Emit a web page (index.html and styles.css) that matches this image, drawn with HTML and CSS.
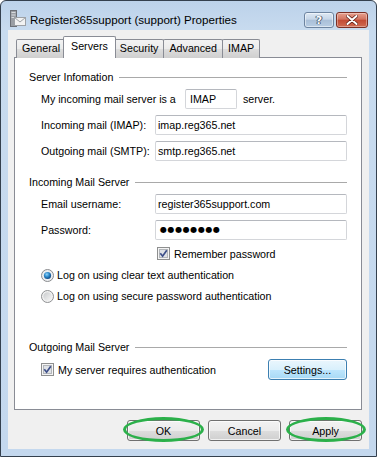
FILE: index.html
```html
<!DOCTYPE html>
<html>
<head>
<meta charset="utf-8">
<link rel="stylesheet" href="styles.css">
</head>
<body>
<div class="window">
  <div class="titlebar">
    <svg class="appicon" width="16" height="18" viewBox="0 0 16 18">
      <rect x="0.5" y="0.5" width="6" height="16" fill="#9a9ea4" stroke="#6c7077"/>
      <rect x="1.5" y="2" width="4" height="1" fill="#d8dadd"/>
      <rect x="1.5" y="4.5" width="4" height="1" fill="#d8dadd"/>
      <rect x="1.5" y="7" width="4" height="1" fill="#d8dadd"/>
      <rect x="4.5" y="7.5" width="11" height="8" fill="#f2f2f2" stroke="#9da1a6"/>
      <path d="M4.5 7.5 L10 12 L15.5 7.5" fill="none" stroke="#9da1a6"/>
    </svg>
    <span class="title">Register365support (support) Properties</span>
    <div class="caption">
      <div class="cbtn help"><span>?</span></div>
      <div class="cbtn close">
        <svg width="12" height="10" viewBox="0 0 12 10">
          <path d="M1.5 1 L10.5 9 M10.5 1 L1.5 9" stroke="#5a1a12" stroke-width="3.4" stroke-linecap="round"/>
          <path d="M1.5 1 L10.5 9 M10.5 1 L1.5 9" stroke="#ffffff" stroke-width="2" stroke-linecap="round"/>
        </svg>
      </div>
    </div>
  </div>
  <div class="client">
    <div class="tabs">
      <div class="tab">General</div>
      <div class="tab active">Servers</div>
      <div class="tab">Security</div>
      <div class="tab">Advanced</div>
      <div class="tab">IMAP</div>
    </div>
    <div class="panel">
      <div class="group g1"><span>Server Infomation</span><i class="rule"></i></div>
      <div class="row r1">
        <span class="lbl-inline">My incoming mail server is a</span>
        <div class="field short">IMAP</div>
        <span class="after">server.</span>
      </div>
      <div class="row r2"><span class="lbl">Incoming mail (IMAP):</span><div class="field">imap.reg365.net</div></div>
      <div class="row r2"><span class="lbl">Outgoing mail (SMTP):</span><div class="field">smtp.reg365.net</div></div>

      <div class="group g2"><span>Incoming Mail Server</span><i class="rule"></i></div>
      <div class="row r1"><span class="lbl">Email username:</span><div class="field">register365support.com</div></div>
      <div class="row r2"><span class="lbl">Password:</span><div class="field"><span class="dots">●●●●●●●●</span></div></div>
      <div class="row check-row remember">
        <svg class="cb" width="13" height="13" viewBox="0 0 13 13">
          <rect x="0.5" y="0.5" width="12" height="12" fill="#f4f4f4" stroke="#8e8f8f"/>
          <rect x="2.5" y="2.5" width="8" height="8" fill="#dfe2e6" stroke="#b3b6ba"/>
          <path d="M3.3 6.3 L5.6 9.2 L9.8 3.2" fill="none" stroke="#3d4f89" stroke-width="1.7"/>
        </svg>
        <span>Remember password</span>
      </div>
      <div class="row radio-row rr1">
        <svg class="rb" width="13" height="13" viewBox="0 0 13 13">
          <defs>
            <radialGradient id="dot" cx="0.4" cy="0.35" r="0.7">
              <stop offset="0" stop-color="#8fd3fb"/>
              <stop offset="0.5" stop-color="#2a87c8"/>
              <stop offset="1" stop-color="#0c3f7a"/>
            </radialGradient>
          </defs>
          <circle cx="6.5" cy="6.5" r="6" fill="#eceef0" stroke="#8a8c8e"/>
          <circle cx="6.5" cy="6.5" r="3.6" fill="url(#dot)"/>
        </svg>
        <span>Log on using clear text authentication</span>
      </div>
      <div class="row radio-row rr2">
        <svg class="rb" width="13" height="13" viewBox="0 0 13 13">
          <defs>
            <linearGradient id="off" x1="0" y1="0" x2="1" y2="1">
              <stop offset="0" stop-color="#c9cbcd"/>
              <stop offset="1" stop-color="#f6f6f6"/>
            </linearGradient>
          </defs>
          <circle cx="6.5" cy="6.5" r="6" fill="#f2f2f2" stroke="#8e9092"/>
          <circle cx="6.5" cy="6.5" r="4.2" fill="url(#off)"/>
        </svg>
        <span>Log on using secure password authentication</span>
      </div>

      <div class="group g3"><span>Outgoing Mail Server</span><i class="rule"></i></div>
      <div class="row auth-row">
        <svg class="cb" width="13" height="13" viewBox="0 0 13 13">
          <rect x="0.5" y="0.5" width="12" height="12" fill="#f4f4f4" stroke="#8e8f8f"/>
          <rect x="2.5" y="2.5" width="8" height="8" fill="#dfe2e6" stroke="#b3b6ba"/>
          <path d="M3.3 6.3 L5.6 9.2 L9.8 3.2" fill="none" stroke="#3d4f89" stroke-width="1.7"/>
        </svg>
        <span class="auth-text">My server requires authentication</span>
        <div class="btn settings">Settings...</div>
      </div>
    </div>
    <div class="footer">
      <div class="btn circled c-ok">OK</div>
      <div class="btn">Cancel</div>
      <div class="btn circled c-apply">Apply</div>
    </div>
  </div>
</div>
</body>
</html>
```

FILE: styles.css
```css
* { box-sizing: border-box; }
html, body { margin: 0; padding: 0; background: #ffffff; }
body {
  font-family: "Liberation Sans", Arial, sans-serif;
  font-size: 10.7px;
  color: #000;
  width: 377px;
  height: 457px;
  overflow: hidden;
}
.window {
  width: 377px;
  height: 457px;
  border: 1px solid #34404e;
  border-radius: 6px 6px 0 0;
  background: linear-gradient(to bottom, #bcd2ea 0px, #c8dbef 30px, #c4d8ee 100%);
  display: flex;
  flex-direction: column;
  padding-bottom: 7px;
}
.titlebar {
  height: 29px;
  display: flex;
  align-items: flex-start;
  padding: 0 8px 0 9px;
  flex-shrink: 0;
}
.appicon { margin-top: 9px; flex-shrink: 0; }
.title {
  margin-left: 4px;
  margin-top: 12px;
  font-size: 11.6px;
  line-height: 14px;
  color: #000;
}
.caption {
  margin-left: auto;
  margin-top: 11px;
  display: flex;
  gap: 2px;
}
.cbtn {
  height: 16px;
  border-radius: 3px;
  display: flex;
  align-items: center;
  justify-content: center;
}
.help {
  width: 30px;
  border: 1px solid #6d84a0;
  background: linear-gradient(to bottom, #dde8f4 0%, #c6d6e8 45%, #a9bfd8 50%, #b8cde3 100%);
  box-shadow: inset 0 0 0 1px rgba(255,255,255,0.5);
}
.help span {
  font-family: "DejaVu Sans", sans-serif;
  font-weight: bold;
  font-size: 11px;
  color: #fff;
  line-height: 11px;
  text-shadow: 0 0 1px #37475c, 0 0 1px #37475c, 1px 0 0 #56677c, -1px 0 0 #56677c;
}
.close {
  width: 32px;
  border: 1px solid #7a2f25;
  background: linear-gradient(to bottom, #e7a08e 0%, #d27461 45%, #c24a34 50%, #cf6b52 100%);
  box-shadow: inset 0 0 0 1px rgba(255,255,255,0.35);
}
.client {
  flex: 1;
  margin: 0 7px;
  background: #f0f0f0;
  padding: 8px 7px 0 6px;
  display: flex;
  flex-direction: column;
}
.tabs {
  height: 20px;
  display: flex;
  align-items: flex-end;
  padding-left: 2px;
  position: relative;
  z-index: 1;
  margin-bottom: -1px;
}
.tab {
  height: 19px;
  padding: 0 5px;
  line-height: 17px;
  border: 1px solid #898c95;
  border-bottom: none;
  margin-right: -1px;
  background: linear-gradient(to bottom, #f3f3f3 0%, #ebebeb 50%, #dddddd 51%, #cfcfcf 100%);
  border-radius: 2px 2px 0 0;
}
.tab.active {
  height: 22px;
  margin: 0 -1px 0 -2px;
  padding: 0 7px;
  line-height: 18px;
  background: #fff;
  position: relative;
  z-index: 2;
}
.tab.active + .tab { margin-left: -1px; }
.panel {
  height: 353px;
  background: #fff;
  border: 1px solid #898c95;
  padding: 0 14px 0 14px;
  display: flex;
  flex-direction: column;
}
.group {
  height: 15px;
  display: flex;
  align-items: center;
  flex-shrink: 0;
}
.group span { line-height: 15px; white-space: nowrap; padding-top: 2px; }
.rule {
  flex: 1;
  height: 1px;
  background: #a9a9a9;
  margin-left: 6px;
  margin-top: 2px;
}
.g1 { margin-top: 11px; }
.g2 { margin-top: 13px; }
.g3 { margin-top: 36px; }
.row {
  display: flex;
  align-items: center;
  padding-left: 12px;
  flex-shrink: 0;
}
.r1 { margin-top: 5px; height: 20px; }
.r2 { margin-top: 6px; height: 20px; }
.lbl { width: 114px; flex-shrink: 0; }
.lbl-inline { width: 144px; flex-shrink: 0; }
.field {
  width: 193px;
  height: 20px;
  border: 1px solid #d4d6da;
  border-top-color: #b5b8be;
  border-radius: 2px;
  padding-left: 2px;
  line-height: 18px;
  background: #fff;
  white-space: nowrap;
}
.field.short { width: 52px; padding-left: 4px; }
.after { margin-left: 6px; }
.dots {
  font-family: "DejaVu Sans", sans-serif;
  font-size: 8px;
  letter-spacing: 0.6px;
  margin-left: 2px;
  vertical-align: top;
}
.check-row { height: 13px; margin-top: 7px; }
.remember { padding-left: 128px; }
.cb { flex-shrink: 0; margin-right: 4px; }
.rb { flex-shrink: 0; margin-right: 3px; }
.radio-row { height: 14px; }
.rr1 { margin-top: 8px; }
.rr2 { margin-top: 7px; }
.auth-row { height: 21px; margin-top: 5px; }
.auth-text { flex: 1; }
.btn {
  height: 21px;
  border: 1px solid #707070;
  border-radius: 3px;
  background: linear-gradient(to bottom, #f2f2f2 0%, #ebebeb 50%, #dddddd 51%, #cfcfcf 100%);
  box-shadow: inset 0 0 0 1px rgba(255,255,255,0.7);
  display: flex;
  align-items: center;
  justify-content: center;
  line-height: 14px;
  position: relative;
}
.settings {
  width: 79px;
  border-color: #3c7fb1;
  background: linear-gradient(to bottom, #eaf6fd 0%, #d9f0fc 50%, #bee6fd 51%, #a7d9f5 100%);
}
.footer {
  margin-top: 10px;
  display: flex;
  justify-content: flex-end;
  gap: 8px;
}
.footer .btn { width: 73px; }
.circled::after {
  content: "";
  position: absolute;
  border: 3.5px solid #2bb04a;
  border-radius: 50%;
  top: -4px;
  bottom: -2px;
}
.c-ok::after { left: -5px; right: -5px; }
.c-apply::after { left: -4px; right: -5px; }
```
